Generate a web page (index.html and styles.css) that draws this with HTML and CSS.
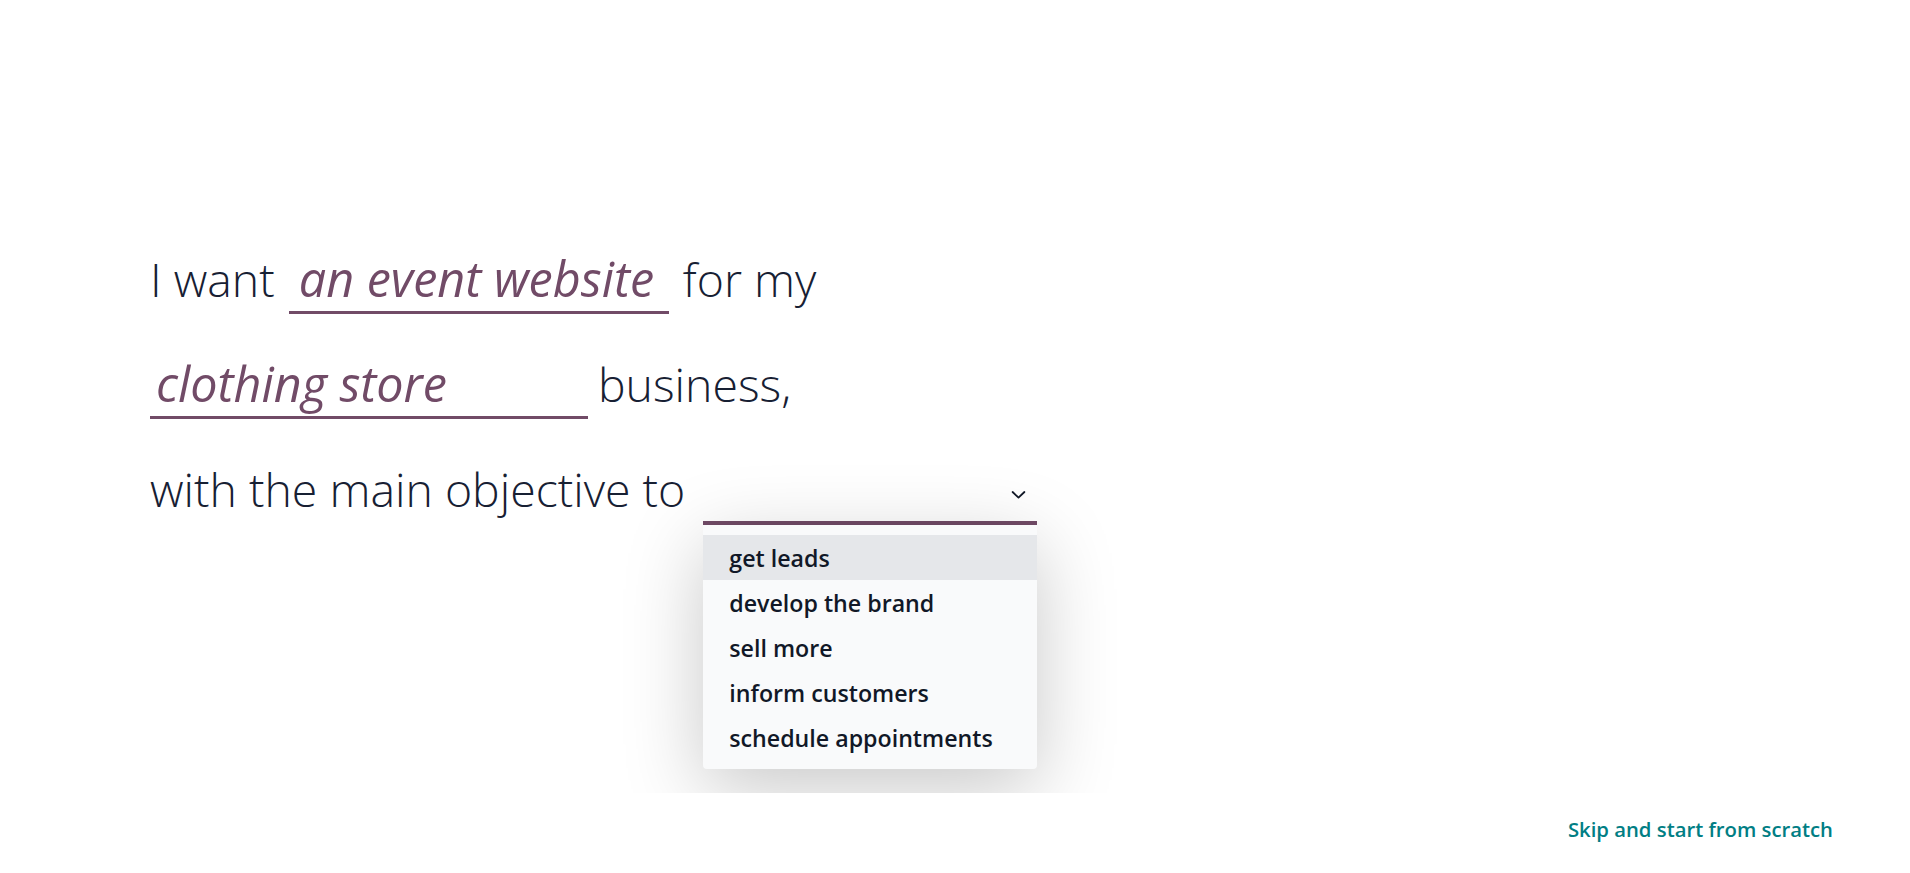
FILE: index.html
```html
<!DOCTYPE html>
<html lang="en">
<head>
<meta charset="utf-8">
<title>Website configurator</title>
<link rel="stylesheet" href="styles.css">
</head>
<body>
<div class="screen">
  <main class="content">
    <div class="typing">
      <div class="line line-1">
        <span class="plain">I want</span>
        <span class="field field-type">an event website</span>
        <span class="plain">for my</span>
      </div>
      <div class="line line-2">
        <span class="field field-industry">clothing store</span>
        <span class="plain">business,</span>
      </div>
      <div class="line line-3">
        <span class="plain">with the main objective to</span>
        <div class="select">
          <div class="select-toggle">
            <span class="select-value">&nbsp;</span>
            <svg class="chevron" width="15" height="10" viewBox="0 0 15 10" aria-hidden="true">
              <path d="M1.6 2 L7.5 7.6 L13.4 2" fill="none" stroke="#111827" stroke-width="1.8" stroke-linecap="round" stroke-linejoin="round"/>
            </svg>
          </div>
          <ul class="menu">
            <li class="item active">get leads</li>
            <li class="item">develop the brand</li>
            <li class="item">sell more</li>
            <li class="item">inform customers</li>
            <li class="item">schedule appointments</li>
          </ul>
        </div>
      </div>
    </div>
  </main>
  <footer class="footer">
    <a class="skip" href="#">Skip and start from scratch</a>
  </footer>
</div>
</body>
</html>
```
FILE: styles.css
```css
html, body {
  margin: 0;
  padding: 0;
  background: #ffffff;
}

body {
  font-family: "Open Sans", "Noto Sans", sans-serif;
  color: #111827;
  overflow: hidden;
}

.screen {
  display: flex;
  flex-direction: column;
  height: 873px;
}

.content {
  height: 793px;
  overflow: hidden;
  padding: 245px 0 0 150px;
  box-sizing: border-box;
}

.typing {
  display: flex;
  flex-direction: column;
  align-items: flex-start;
}

.line {
  display: flex;
  align-items: baseline;
  gap: 14px;
}

.line-2 {
  margin-top: 36px;
  gap: 10px;
}

.line-3 {
  margin-top: 36px;
  gap: 18px;
}

.plain {
  font-size: 46.4px;
  font-weight: 300;
  line-height: normal;
  color: #172033;
  white-space: nowrap;
}

.field {
  font-size: 48.5px;
  font-style: italic;
  font-weight: 400;
  line-height: normal;
  color: #714b67;
  border-bottom: 3px solid #714b67;
  white-space: nowrap;
  box-sizing: border-box;
}

.field-type {
  width: 380px;
  padding-left: 10px;
}

.field-industry {
  width: 438px;
  padding-left: 6px;
}

.select {
  position: relative;
  width: 334px;
}

.select-toggle {
  display: flex;
  align-items: flex-end;
  border-bottom: 4px solid #714b67;
  padding-right: 11px;
}

.select-value {
  flex: 1;
  font-size: 48.5px;
  font-style: italic;
  line-height: normal;
}

.chevron {
  display: block;
  margin-bottom: 21px;
}

.menu {
  position: absolute;
  top: 100%;
  left: 0;
  width: 100%;
  margin: 0;
  padding: 10px 0 9px;
  list-style: none;
  background: #f9fafb;
  border-radius: 0 0 4px 4px;
  box-shadow: 0 20px 80px rgba(0, 0, 0, 0.22);
  box-sizing: border-box;
  z-index: 2;
}

.item {
  height: 45px;
  box-sizing: border-box;
  padding: 2px 0 0 26px;
  line-height: 43px;
  font-size: 23.2px;
  font-weight: 600;
  color: #111827;
  white-space: nowrap;
}

.item.active {
  background: #e5e7ea;
}

.footer {
  flex: 1;
  display: flex;
  justify-content: flex-end;
  align-items: flex-start;
  padding: 22px 77px 0 0;
}

.skip {
  font-size: 20.3px;
  font-weight: 600;
  line-height: normal;
  color: #017e84;
  text-decoration: none;
}
```
